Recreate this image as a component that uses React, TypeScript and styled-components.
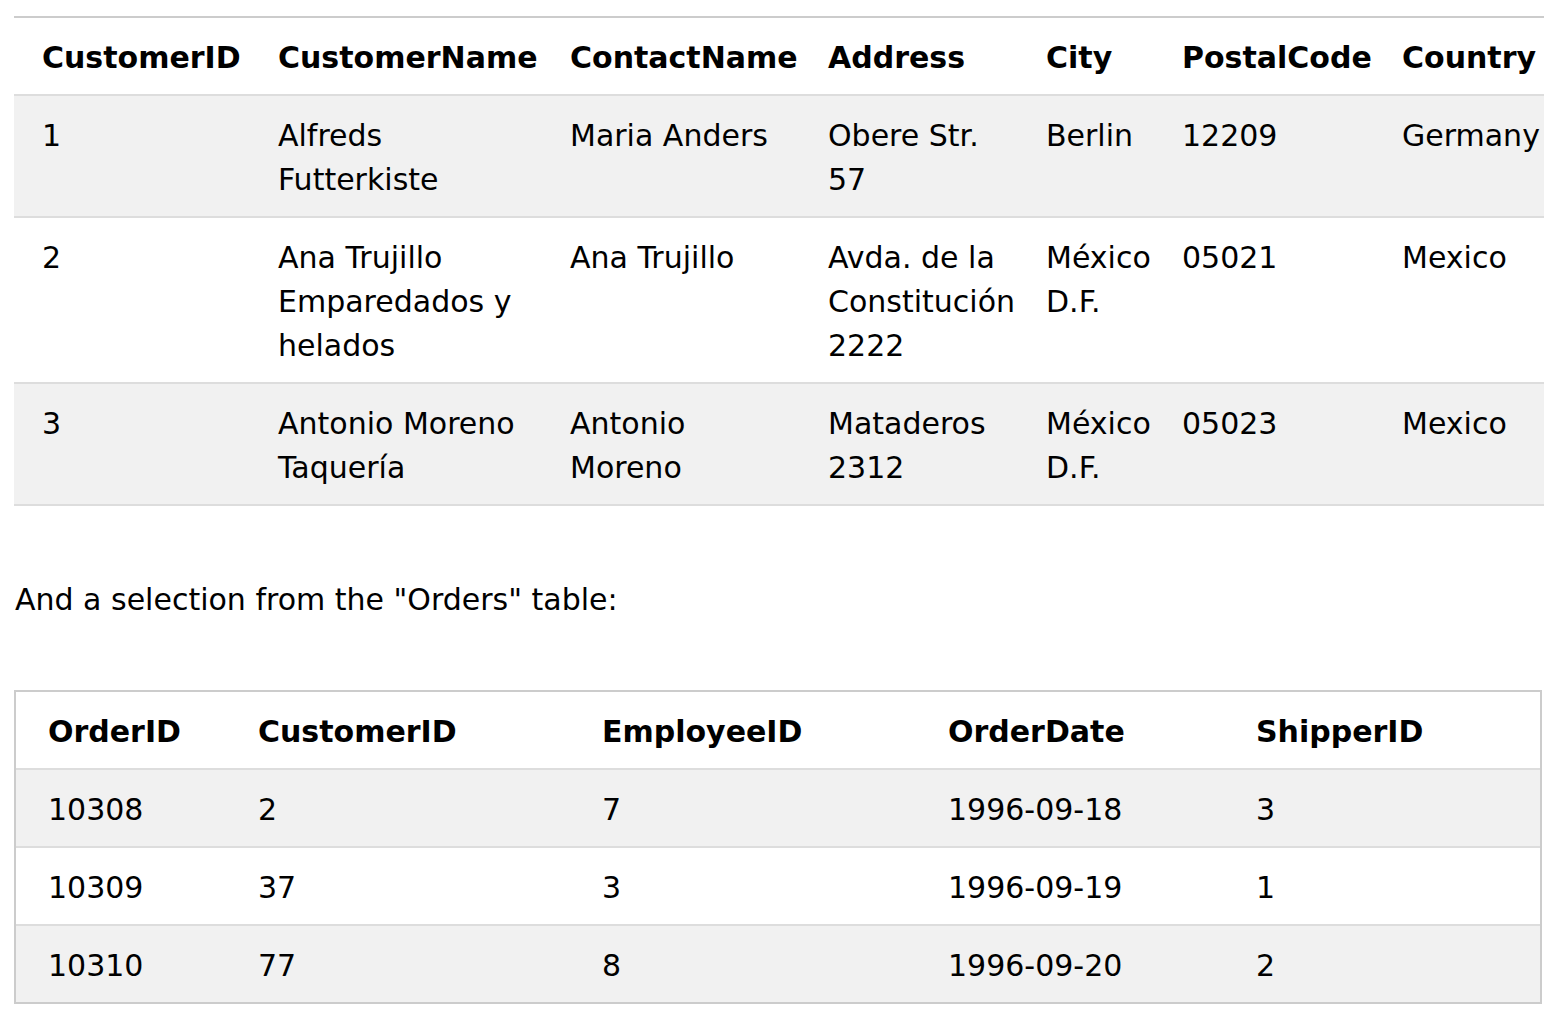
import styled, { createGlobalStyle } from "styled-components";

const GlobalStyle = createGlobalStyle`
  *, *::before, *::after {
    box-sizing: border-box;
  }
  body {
    margin: 0;
    background: #fff;
    color: #000;
    font-family: "DejaVu Sans", Verdana, sans-serif;
    font-size: 30px;
    line-height: 44px;
  }
`;

const Page = styled.div`
  padding: 16px 0 0 14px;
`;

const Table = styled.table<{ $boxed?: boolean; $width: number }>`
  width: ${(p) => p.$width}px;
  table-layout: fixed;
  border-collapse: separate;
  border-spacing: 0;
  border-top: 2px solid #ccc;
  border-left: ${(p) => (p.$boxed ? "2px solid #ccc" : "none")};
  border-right: ${(p) => (p.$boxed ? "2px solid #ccc" : "none")};
  border-bottom: ${(p) => (p.$boxed ? "2px solid #ccc" : "none")};
`;

const Row = styled.tr<{ $striped?: boolean }>`
  background-color: ${(p) => (p.$striped ? "#f1f1f1" : "#fff")};
`;

const HeadCell = styled.th<{ $first?: boolean; $lead: number }>`
  font-weight: bold;
  text-align: left;
  vertical-align: top;
  padding: 18px 12px 14px ${(p) => (p.$first ? p.$lead : 16)}px;
  border-bottom: 2px solid #ddd;
`;

const Cell = styled.td<{ $first?: boolean; $lead: number; $last?: boolean }>`
  vertical-align: top;
  padding: 18px 12px 14px ${(p) => (p.$first ? p.$lead : 16)}px;
  border-bottom: ${(p) => (p.$last ? "none" : "2px solid #ddd")};
`;

const Intro = styled.p`
  margin: 72px 0 68px 1px;
`;

const customerCols = [248, 292, 258, 218, 136, 220, 158];
const customerHead = ["CustomerID", "CustomerName", "ContactName", "Address", "City", "PostalCode", "Country"];
const customers = [
  ["1", "Alfreds Futterkiste", "Maria Anders", "Obere Str. 57", "Berlin", "12209", "Germany"],
  ["2", "Ana Trujillo Emparedados y helados", "Ana Trujillo", "Avda. de la Constitución 2222", "México D.F.", "05021", "Mexico"],
  ["3", "Antonio Moreno Taquería", "Antonio Moreno", "Mataderos 2312", "México D.F.", "05023", "Mexico"],
];

const orderCols = [226, 344, 346, 308, 300];
const orderHead = ["OrderID", "CustomerID", "EmployeeID", "OrderDate", "ShipperID"];
const orders = [
  ["10308", "2", "7", "1996-09-18", "3"],
  ["10309", "37", "3", "1996-09-19", "1"],
  ["10310", "77", "8", "1996-09-20", "2"],
];

type DataTableProps = {
  cols: number[];
  head: string[];
  rows: string[][];
  lead: number;
  boxed?: boolean;
  lastBorder?: boolean;
};

const DataTable = ({ cols, head, rows, lead, boxed, lastBorder }: DataTableProps) => {
  const total = cols.reduce((a, b) => a + b, 0) + (boxed ? 4 : 0);
  return (
    <Table $boxed={boxed} $width={total}>
      <thead>
        <Row>
          {head.map((h, i) => (
            <HeadCell key={h} $first={i === 0} $lead={lead} style={{ width: cols[i] }}>
              {h}
            </HeadCell>
          ))}
        </Row>
      </thead>
      <tbody>
        {rows.map((r, ri) => (
          <Row key={ri} $striped={ri % 2 === 0}>
            {r.map((c, i) => (
              <Cell key={i} $first={i === 0} $lead={lead} $last={!lastBorder && ri === rows.length - 1}>
                {c}
              </Cell>
            ))}
          </Row>
        ))}
      </tbody>
    </Table>
  );
};

const App = () => {
  return (
    <>
      <GlobalStyle />
      <Page>
        <DataTable cols={customerCols} head={customerHead} rows={customers} lead={28} lastBorder />
        <Intro>And a selection from the "Orders" table:</Intro>
        <DataTable cols={orderCols} head={orderHead} rows={orders} lead={32} boxed />
      </Page>
    </>
  );
};

export default App;
